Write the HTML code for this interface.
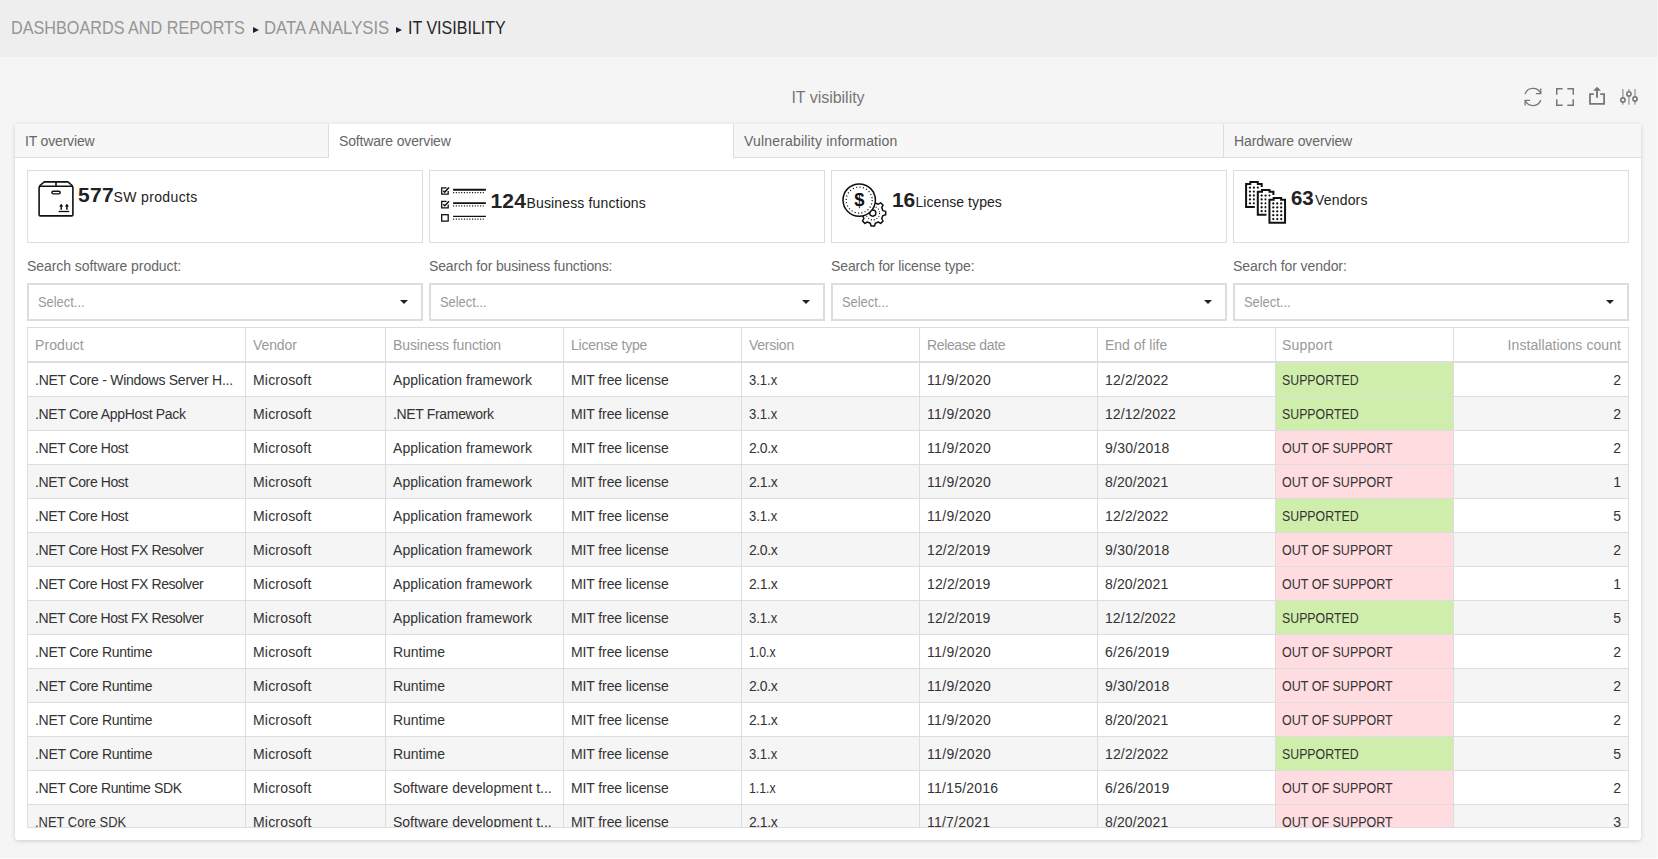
<!DOCTYPE html>
<html lang="en">
<head>
<meta charset="utf-8">
<title>IT visibility</title>
<style>
*{box-sizing:border-box;margin:0;padding:0}
html,body{width:1658px;height:859px;overflow:hidden}
body{background:#f5f5f5;font-family:"Liberation Sans",sans-serif;font-size:13px;color:#333;position:relative}
.abs{position:absolute}
#hdr{left:0;top:0;width:1658px;height:57px;background:#eeeeee}
#crumb{left:10.5px;top:16px;height:24px;line-height:24px;font-size:17.5px;white-space:nowrap;color:#959595}
#crumb span.c{position:absolute;top:0;white-space:nowrap}
#crumb .cur{color:#262626}
#crumb .ar{position:absolute;top:10.5px;width:0;height:0;border-top:3.5px solid transparent;border-bottom:3.5px solid transparent;border-left:6px solid #1c2233}
#title{left:0;width:1656px;top:88px;text-align:center;font-size:16px;line-height:20px;color:#777}
#panel{left:15px;top:124px;width:1626px;height:716px;background:#fff;border-radius:3px;box-shadow:0 1px 4px rgba(0,0,0,.17)}
.tab{position:absolute;top:0;height:34px;line-height:35px;background:#f7f7f7;border-right:1px solid #ddd;border-bottom:1px solid #ddd;padding-left:10px;color:#666;font-size:14px;white-space:nowrap}
.tab.act{background:#fff;border-bottom:none;border-right:1px solid #ddd}
.card{position:absolute;top:46px;width:396px;height:73px;border:1px solid #ddd;background:#fff}
.card b{position:absolute;font-size:21px;line-height:24px;color:#222;font-weight:bold;white-space:nowrap}
.card i{position:absolute;font-style:normal;font-size:14px;line-height:20px;color:#222;white-space:nowrap}
.card svg{position:absolute}
.lbl{position:absolute;top:132px;height:20px;line-height:20px;color:#666;font-size:14px;white-space:nowrap}
.sel{position:absolute;top:159px;width:396px;height:38px;border:2px solid #ddd;background:#fff;color:#999;line-height:35px;padding-left:9px;font-size:14px}
.sel:after{content:"";position:absolute;right:13px;top:15px;border-left:4px solid transparent;border-right:4px solid transparent;border-top:4px solid #222}
#tw{left:12px;top:203px;width:1602px;height:501px;overflow:hidden;border-bottom:1px solid #ddd}
table{border-collapse:collapse;table-layout:fixed;width:1601px;font-size:14px}
th,td{border:1px solid #ddd;height:34px;padding:1px 7px 0;text-align:left;white-space:nowrap;overflow:hidden;font-weight:normal}
th{color:#999;height:34px;border-bottom:2px solid #ddd}
tbody tr:first-child td{height:35px}
tr:nth-child(even) td{background:#f5f5f5}
td.sup{background:#d0eeab !important}
td.oos{background:#ffdce0 !important}
td.sup,td.oos,th:nth-child(8){padding-left:6px}
.num{text-align:right}
</style>
</head>
<body>
<div id="hdr" class="abs"></div>
<div id="crumb" class="abs"><span class="c" style="left:0"><span style="display:inline-block;transform:scaleX(0.9259);transform-origin:0 50%">DASHBOARDS AND REPORTS</span></span><i class="ar" style="left:242px"></i><span class="c" style="left:253px"><span style="display:inline-block;transform:scaleX(0.9531);transform-origin:0 50%">DATA ANALYSIS</span></span><i class="ar" style="left:385.5px"></i><span class="c cur" style="left:397.5px"><span style="display:inline-block;transform:scaleX(0.9167);transform-origin:0 50%">IT VISIBILITY</span></span></div>
<div id="title" class="abs"><span style="letter-spacing:-0.03px">IT visibility</span></div>
<div id="tools" class="abs"></div>
<div id="panel" class="abs">
<div class="tab" style="left:0;width:314px"><span style="letter-spacing:-0.17px">IT overview</span></div>
<div class="tab act" style="left:314px;width:405px"><span style="letter-spacing:-0.16px">Software overview</span></div>
<div class="tab" style="left:719px;width:490px"><span style="letter-spacing:0.18px">Vulnerability information</span></div>
<div class="tab" style="left:1209px;width:417px;border-right:none"><span style="letter-spacing:-0.1px">Hardware overview</span></div>

<div class="card" style="left:12px"><b style="left:50px;top:12px"><span style="letter-spacing:0.35px">577</span></b><i style="left:85.5px;top:16px"><span style="letter-spacing:0.36px">SW products</span></i></div>
<div class="card" style="left:414px"><b style="left:60.5px;top:18px"><span style="letter-spacing:0.15px">124</span></b><i style="left:96.5px;top:22px"><span style="letter-spacing:0.15px">Business functions</span></i></div>
<div class="card" style="left:816px"><b style="left:60px;top:17px"><span style="letter-spacing:-0.1px">16</span></b><i style="left:83.5px;top:21px"><span style="letter-spacing:0.06px">License types</span></i></div>
<div class="card" style="left:1218px"><b style="left:57px;top:15px"><span style="display:inline-block;transform:scaleX(0.9727);transform-origin:0 50%">63</span></b><i style="left:81px;top:19px"><span style="letter-spacing:0.18px">Vendors</span></i></div>

<div class="lbl" style="left:12px"><span style="letter-spacing:-0.06px">Search software product:</span></div>
<div class="lbl" style="left:414px"><span style="letter-spacing:-0.14px">Search for business functions:</span></div>
<div class="lbl" style="left:816px"><span style="letter-spacing:-0.12px">Search for license type:</span></div>
<div class="lbl" style="left:1218px"><span style="letter-spacing:-0.08px">Search for vendor:</span></div>

<div class="sel" style="left:12px"><span style="display:inline-block;transform:scaleX(0.9204);transform-origin:0 50%">Select...</span></div>
<div class="sel" style="left:414px"><span style="display:inline-block;transform:scaleX(0.9204);transform-origin:0 50%">Select...</span></div>
<div class="sel" style="left:816px"><span style="display:inline-block;transform:scaleX(0.9204);transform-origin:0 50%">Select...</span></div>
<div class="sel" style="left:1218px"><span style="display:inline-block;transform:scaleX(0.9204);transform-origin:0 50%">Select...</span></div>

<div id="tw" class="abs">
<table>
<colgroup><col style="width:218px"><col style="width:140px"><col style="width:178px"><col style="width:178px"><col style="width:178px"><col style="width:178px"><col style="width:178px"><col style="width:178px"><col style="width:175px"></colgroup>
<thead><tr><th><span style="letter-spacing:0.08px">Product</span></th><th><span style="letter-spacing:-0.1px">Vendor</span></th><th><span style="letter-spacing:-0.1px">Business function</span></th><th><span style="letter-spacing:-0.21px">License type</span></th><th><span style="letter-spacing:-0.25px">Version</span></th><th><span style="letter-spacing:-0.37px">Release date</span></th><th><span style="letter-spacing:-0.01px">End of life</span></th><th><span style="letter-spacing:0.23px">Support</span></th><th class=num><span style="letter-spacing:0.07px">Installations count</span></th></tr></thead>
<tbody>
<tr><td><span style="letter-spacing:-0.26px">.NET Core - Windows Server H...</span></td><td><span style="letter-spacing:0.19px">Microsoft</span></td><td><span style="letter-spacing:0.06px">Application framework</span></td><td><span style="letter-spacing:-0.11px">MIT free license</span></td><td><span style="display:inline-block;transform:scaleX(0.931);transform-origin:0 50%">3.1.x</span></td><td><span style="letter-spacing:0.33px">11/9/2020</span></td><td><span style="letter-spacing:0.14px">12/2/2022</span></td><td class="sup"><span style="display:inline-block;transform:scaleX(0.8812);transform-origin:0 50%">SUPPORTED</span></td><td class="num">2</td></tr>
<tr><td><span style="letter-spacing:-0.32px">.NET Core AppHost Pack</span></td><td><span style="letter-spacing:0.19px">Microsoft</span></td><td><span style="letter-spacing:-0.34px">.NET Framework</span></td><td><span style="letter-spacing:-0.11px">MIT free license</span></td><td><span style="display:inline-block;transform:scaleX(0.931);transform-origin:0 50%">3.1.x</span></td><td><span style="letter-spacing:0.33px">11/9/2020</span></td><td><span style="letter-spacing:0.07px">12/12/2022</span></td><td class="sup"><span style="display:inline-block;transform:scaleX(0.8812);transform-origin:0 50%">SUPPORTED</span></td><td class="num">2</td></tr>
<tr><td><span style="letter-spacing:-0.4px">.NET Core Host</span></td><td><span style="letter-spacing:0.19px">Microsoft</span></td><td><span style="letter-spacing:0.06px">Application framework</span></td><td><span style="letter-spacing:-0.11px">MIT free license</span></td><td><span style="letter-spacing:-0.43px">2.0.x</span></td><td><span style="letter-spacing:0.33px">11/9/2020</span></td><td><span style="letter-spacing:0.26px">9/30/2018</span></td><td class="oos"><span style="display:inline-block;transform:scaleX(0.8935);transform-origin:0 50%">OUT OF SUPPORT</span></td><td class="num">2</td></tr>
<tr><td><span style="letter-spacing:-0.4px">.NET Core Host</span></td><td><span style="letter-spacing:0.19px">Microsoft</span></td><td><span style="letter-spacing:0.06px">Application framework</span></td><td><span style="letter-spacing:-0.11px">MIT free license</span></td><td><span style="letter-spacing:-0.43px">2.1.x</span></td><td><span style="letter-spacing:0.33px">11/9/2020</span></td><td><span style="letter-spacing:0.11px">8/20/2021</span></td><td class="oos"><span style="display:inline-block;transform:scaleX(0.8935);transform-origin:0 50%">OUT OF SUPPORT</span></td><td class="num">1</td></tr>
<tr><td><span style="letter-spacing:-0.4px">.NET Core Host</span></td><td><span style="letter-spacing:0.19px">Microsoft</span></td><td><span style="letter-spacing:0.06px">Application framework</span></td><td><span style="letter-spacing:-0.11px">MIT free license</span></td><td><span style="display:inline-block;transform:scaleX(0.931);transform-origin:0 50%">3.1.x</span></td><td><span style="letter-spacing:0.33px">11/9/2020</span></td><td><span style="letter-spacing:0.14px">12/2/2022</span></td><td class="sup"><span style="display:inline-block;transform:scaleX(0.8812);transform-origin:0 50%">SUPPORTED</span></td><td class="num">5</td></tr>
<tr><td><span style="letter-spacing:-0.43px">.NET Core Host FX Resolver</span></td><td><span style="letter-spacing:0.19px">Microsoft</span></td><td><span style="letter-spacing:0.06px">Application framework</span></td><td><span style="letter-spacing:-0.11px">MIT free license</span></td><td><span style="letter-spacing:-0.43px">2.0.x</span></td><td><span style="letter-spacing:0.14px">12/2/2019</span></td><td><span style="letter-spacing:0.26px">9/30/2018</span></td><td class="oos"><span style="display:inline-block;transform:scaleX(0.8935);transform-origin:0 50%">OUT OF SUPPORT</span></td><td class="num">2</td></tr>
<tr><td><span style="letter-spacing:-0.43px">.NET Core Host FX Resolver</span></td><td><span style="letter-spacing:0.19px">Microsoft</span></td><td><span style="letter-spacing:0.06px">Application framework</span></td><td><span style="letter-spacing:-0.11px">MIT free license</span></td><td><span style="letter-spacing:-0.43px">2.1.x</span></td><td><span style="letter-spacing:0.14px">12/2/2019</span></td><td><span style="letter-spacing:0.11px">8/20/2021</span></td><td class="oos"><span style="display:inline-block;transform:scaleX(0.8935);transform-origin:0 50%">OUT OF SUPPORT</span></td><td class="num">1</td></tr>
<tr><td><span style="letter-spacing:-0.43px">.NET Core Host FX Resolver</span></td><td><span style="letter-spacing:0.19px">Microsoft</span></td><td><span style="letter-spacing:0.06px">Application framework</span></td><td><span style="letter-spacing:-0.11px">MIT free license</span></td><td><span style="display:inline-block;transform:scaleX(0.931);transform-origin:0 50%">3.1.x</span></td><td><span style="letter-spacing:0.14px">12/2/2019</span></td><td><span style="letter-spacing:0.07px">12/12/2022</span></td><td class="sup"><span style="display:inline-block;transform:scaleX(0.8812);transform-origin:0 50%">SUPPORTED</span></td><td class="num">5</td></tr>
<tr><td><span style="letter-spacing:-0.28px">.NET Core Runtime</span></td><td><span style="letter-spacing:0.19px">Microsoft</span></td><td><span style="letter-spacing:-0.03px">Runtime</span></td><td><span style="letter-spacing:-0.11px">MIT free license</span></td><td><span style="display:inline-block;transform:scaleX(0.8793);transform-origin:0 50%">1.0.x</span></td><td><span style="letter-spacing:0.33px">11/9/2020</span></td><td><span style="letter-spacing:0.26px">6/26/2019</span></td><td class="oos"><span style="display:inline-block;transform:scaleX(0.8935);transform-origin:0 50%">OUT OF SUPPORT</span></td><td class="num">2</td></tr>
<tr><td><span style="letter-spacing:-0.28px">.NET Core Runtime</span></td><td><span style="letter-spacing:0.19px">Microsoft</span></td><td><span style="letter-spacing:-0.03px">Runtime</span></td><td><span style="letter-spacing:-0.11px">MIT free license</span></td><td><span style="letter-spacing:-0.43px">2.0.x</span></td><td><span style="letter-spacing:0.33px">11/9/2020</span></td><td><span style="letter-spacing:0.26px">9/30/2018</span></td><td class="oos"><span style="display:inline-block;transform:scaleX(0.8935);transform-origin:0 50%">OUT OF SUPPORT</span></td><td class="num">2</td></tr>
<tr><td><span style="letter-spacing:-0.28px">.NET Core Runtime</span></td><td><span style="letter-spacing:0.19px">Microsoft</span></td><td><span style="letter-spacing:-0.03px">Runtime</span></td><td><span style="letter-spacing:-0.11px">MIT free license</span></td><td><span style="letter-spacing:-0.43px">2.1.x</span></td><td><span style="letter-spacing:0.33px">11/9/2020</span></td><td><span style="letter-spacing:0.11px">8/20/2021</span></td><td class="oos"><span style="display:inline-block;transform:scaleX(0.8935);transform-origin:0 50%">OUT OF SUPPORT</span></td><td class="num">2</td></tr>
<tr><td><span style="letter-spacing:-0.28px">.NET Core Runtime</span></td><td><span style="letter-spacing:0.19px">Microsoft</span></td><td><span style="letter-spacing:-0.03px">Runtime</span></td><td><span style="letter-spacing:-0.11px">MIT free license</span></td><td><span style="display:inline-block;transform:scaleX(0.931);transform-origin:0 50%">3.1.x</span></td><td><span style="letter-spacing:0.33px">11/9/2020</span></td><td><span style="letter-spacing:0.14px">12/2/2022</span></td><td class="sup"><span style="display:inline-block;transform:scaleX(0.8812);transform-origin:0 50%">SUPPORTED</span></td><td class="num">5</td></tr>
<tr><td><span style="letter-spacing:-0.38px">.NET Core Runtime SDK</span></td><td><span style="letter-spacing:0.19px">Microsoft</span></td><td>Software development t...</td><td><span style="letter-spacing:-0.11px">MIT free license</span></td><td><span style="display:inline-block;transform:scaleX(0.8793);transform-origin:0 50%">1.1.x</span></td><td><span style="letter-spacing:0.23px">11/15/2016</span></td><td><span style="letter-spacing:0.26px">6/26/2019</span></td><td class="oos"><span style="display:inline-block;transform:scaleX(0.8935);transform-origin:0 50%">OUT OF SUPPORT</span></td><td class="num">2</td></tr>
<tr><td><span style="display:inline-block;transform:scaleX(0.9247);transform-origin:0 50%">.NET Core SDK</span></td><td><span style="letter-spacing:0.19px">Microsoft</span></td><td>Software development t...</td><td><span style="letter-spacing:-0.11px">MIT free license</span></td><td><span style="letter-spacing:-0.43px">2.1.x</span></td><td><span style="letter-spacing:0.22px">11/7/2021</span></td><td><span style="letter-spacing:0.11px">8/20/2021</span></td><td class="oos"><span style="display:inline-block;transform:scaleX(0.8935);transform-origin:0 50%">OUT OF SUPPORT</span></td><td class="num">3</td></tr>
</tbody>
</table>
</div>
</div>
<svg class="abs" style="left:0;top:0" width="1658" height="859" viewBox="0 0 1658 859">
<g fill="none" stroke="#777" stroke-width="1.3">
<path d="M1525.1 93.9 A8.4 8.4 0 0 1 1540.7 93.5"/><path d="M1540.8 88.6 V93.6 H1535.9"/>
<path d="M1540.8 100 A8.4 8.4 0 0 1 1525.2 100.5"/><path d="M1525.1 105.4 V100.4 H1530"/>
</g>
<g fill="none" stroke="#777" stroke-width="1.5">
<path d="M1556.75 94.7 V88.75 H1562.7 M1567.3 88.75 H1573.25 V94.7 M1573.25 99.3 V105.25 H1567.3 M1562.7 105.25 H1556.75 V99.3"/>
</g>
<g fill="none" stroke="#777" stroke-width="1.8">
<path d="M1593.8 94.1 H1590 V103.9 H1604.1 V94.1 H1600.2"/><path d="M1597 90 V97.8" stroke-width="1.9"/>
</g>
<path d="M1597.05 86.7 L1601 90.8 H1593.1 Z" fill="#777"/>
<g stroke="#aaa" stroke-width="1.6"><path d="M1622.9 89.1 V104.8 M1628.9 89.1 V104.8 M1635 89.1 V104.8"/></g>
<g fill="#f5f5f5" stroke="#777" stroke-width="1.6"><circle cx="1622.9" cy="99.95" r="2.1"/><circle cx="1628.9" cy="93.9" r="2.1"/><circle cx="1635" cy="99" r="2.1"/></g>

<g fill="none" stroke="#111" stroke-width="1.6" stroke-linejoin="round">
<rect x="39.1" y="186.2" width="33.8" height="29.7" rx="1.2"/>
<path d="M39.4 186 L44.3 181.9 H67.9 L72.7 186 M56 181.9 V186.2"/>
<rect x="51.9" y="191.3" width="8.3" height="2.6" rx="1.3" stroke-width="1.4"/>
<path d="M61.2 205.5 V209.8 M66.9 205.5 V209.8" stroke-width="1.5"/>
<path d="M58.6 211.5 H69.2" stroke-width="1.3"/>
</g>
<path d="M61.2 203.7 L63.3 206.6 H59.1 Z M66.9 203.7 L69 206.6 H64.8 Z" fill="#111"/>
<g fill="none" stroke="#111" stroke-width="1.3"><path d="M446.6 187.8 H441.7 V194.20000000000002 H448.2 V191.0"/><path d="M443.3 190.70000000000002 L444.7 192.10000000000002 L449 187.60000000000002" stroke-width="1.5"/><path d="M446.6 201.4 H441.7 V207.8 H448.2 V204.6"/><path d="M443.3 204.3 L444.7 205.70000000000002 L449 201.20000000000002" stroke-width="1.5"/><rect x="441.7" y="214.7" width="6.5" height="6.4"/></g><path d="M453.1 189.8 H485.9" stroke="#111" stroke-width="2.0"/><path d="M453.1 203.1 H485.9" stroke="#111" stroke-width="1.7"/><path d="M453.1 216.4 H485.9" stroke="#111" stroke-width="1.2"/><path d="M453.1 192.7 H483.8" stroke="#111" stroke-width="1.2" stroke-dasharray="1.1 1.6"/><path d="M453.1 205.9 H483.8" stroke="#111" stroke-width="1.2" stroke-dasharray="1.1 1.6"/><path d="M453.1 219.2 H483.8" stroke="#111" stroke-width="1.2" stroke-dasharray="1.1 1.6"/>
<path d="M882.9 210.6 L885.7 211.4 L885.7 214.8 L882.9 215.6 L881.7 218.5 L883.1 221.0 L880.7 223.4 L878.2 222.0 L875.3 223.2 L874.5 226.0 L871.1 226.0 L870.3 223.2 L867.4 222.0 L864.9 223.4 L862.5 221.0 L863.9 218.5 L862.7 215.6 L859.9 214.8 L859.9 211.4 L862.7 210.6 L863.9 207.7 L862.5 205.2 L864.9 202.8 L867.4 204.2 L870.3 203.0 L871.1 200.2 L874.5 200.2 L875.3 203.0 L878.2 204.2 L880.7 202.8 L883.1 205.2 L881.7 207.7 Z" fill="#fff" stroke="#111" stroke-width="1.5" stroke-linejoin="round"/>
<circle cx="872.8" cy="213.1" r="6.8" fill="none" stroke="#111" stroke-width="1.1" stroke-dasharray="1 1.9"/>
<circle cx="872.8" cy="213.1" r="3.1" fill="#fff" stroke="#111" stroke-width="1.4"/>
<circle cx="859.2" cy="200.1" r="16.2" fill="#fff" stroke="#111" stroke-width="1.5"/>
<circle cx="859.2" cy="200.1" r="13" fill="none" stroke="#111" stroke-width="1.2" stroke-dasharray="1.1 2.3"/>
<text x="859.3" y="206.2" text-anchor="middle" font-family="Liberation Sans, sans-serif" font-size="18.4" font-weight="bold" fill="#111">$</text>
<path d="M1246.10 207.00 V183.90 H1250.30 V182.10 H1257.80 V183.90 H1261.70 V207.00 Z" fill="#fff" stroke="#fff" stroke-width="6"/><path d="M1246.10 207.00 V183.90 H1250.30 V182.10 H1257.80 V183.90 H1261.70 V207.00 Z" fill="#fff" stroke="#111" stroke-width="2"/><circle cx="1249.95" cy="187.70" r="1.15" fill="#111"/><circle cx="1249.95" cy="191.60" r="1.15" fill="#111"/><circle cx="1249.95" cy="195.50" r="1.15" fill="#111"/><circle cx="1249.95" cy="199.40" r="1.15" fill="#111"/><circle cx="1249.95" cy="203.30" r="1.15" fill="#111"/><circle cx="1253.90" cy="187.70" r="1.15" fill="#111"/><circle cx="1253.90" cy="191.60" r="1.15" fill="#111"/><circle cx="1253.90" cy="195.50" r="1.15" fill="#111"/><circle cx="1253.90" cy="199.40" r="1.15" fill="#111"/><circle cx="1253.90" cy="203.30" r="1.15" fill="#111"/><circle cx="1257.85" cy="187.70" r="1.15" fill="#111"/><circle cx="1257.85" cy="191.60" r="1.15" fill="#111"/><circle cx="1257.85" cy="195.50" r="1.15" fill="#111"/><circle cx="1257.85" cy="199.40" r="1.15" fill="#111"/><circle cx="1257.85" cy="203.30" r="1.15" fill="#111"/><path d="M1257.80 214.85 V191.75 H1262.00 V189.95 H1269.50 V191.75 H1273.40 V214.85 Z" fill="#fff" stroke="#fff" stroke-width="6"/><path d="M1257.80 214.85 V191.75 H1262.00 V189.95 H1269.50 V191.75 H1273.40 V214.85 Z" fill="#fff" stroke="#111" stroke-width="2"/><circle cx="1261.65" cy="195.55" r="1.15" fill="#111"/><circle cx="1261.65" cy="199.45" r="1.15" fill="#111"/><circle cx="1261.65" cy="203.35" r="1.15" fill="#111"/><circle cx="1261.65" cy="207.25" r="1.15" fill="#111"/><circle cx="1261.65" cy="211.15" r="1.15" fill="#111"/><circle cx="1265.60" cy="195.55" r="1.15" fill="#111"/><circle cx="1265.60" cy="199.45" r="1.15" fill="#111"/><circle cx="1265.60" cy="203.35" r="1.15" fill="#111"/><circle cx="1265.60" cy="207.25" r="1.15" fill="#111"/><circle cx="1265.60" cy="211.15" r="1.15" fill="#111"/><circle cx="1269.55" cy="195.55" r="1.15" fill="#111"/><circle cx="1269.55" cy="199.45" r="1.15" fill="#111"/><circle cx="1269.55" cy="203.35" r="1.15" fill="#111"/><circle cx="1269.55" cy="207.25" r="1.15" fill="#111"/><circle cx="1269.55" cy="211.15" r="1.15" fill="#111"/><path d="M1269.45 222.80 V199.70 H1273.65 V197.90 H1281.15 V199.70 H1285.05 V222.80 Z" fill="#fff" stroke="#fff" stroke-width="6"/><path d="M1269.45 222.80 V199.70 H1273.65 V197.90 H1281.15 V199.70 H1285.05 V222.80 Z" fill="#fff" stroke="#111" stroke-width="2"/><circle cx="1273.30" cy="203.50" r="1.15" fill="#111"/><circle cx="1273.30" cy="207.40" r="1.15" fill="#111"/><circle cx="1273.30" cy="211.30" r="1.15" fill="#111"/><circle cx="1273.30" cy="215.20" r="1.15" fill="#111"/><circle cx="1273.30" cy="219.10" r="1.15" fill="#111"/><circle cx="1277.25" cy="203.50" r="1.15" fill="#111"/><circle cx="1277.25" cy="207.40" r="1.15" fill="#111"/><circle cx="1277.25" cy="211.30" r="1.15" fill="#111"/><circle cx="1277.25" cy="215.20" r="1.15" fill="#111"/><circle cx="1277.25" cy="219.10" r="1.15" fill="#111"/><circle cx="1281.20" cy="203.50" r="1.15" fill="#111"/><circle cx="1281.20" cy="207.40" r="1.15" fill="#111"/><circle cx="1281.20" cy="211.30" r="1.15" fill="#111"/><circle cx="1281.20" cy="215.20" r="1.15" fill="#111"/><circle cx="1281.20" cy="219.10" r="1.15" fill="#111"/></svg>
<div class="abs" style="right:0;top:0;width:1px;height:859px;background:rgba(255,255,255,.45)"></div><div class="abs" style="left:0;bottom:0;width:1658px;height:1px;background:rgba(255,255,255,.6)"></div>
</body>
</html>
